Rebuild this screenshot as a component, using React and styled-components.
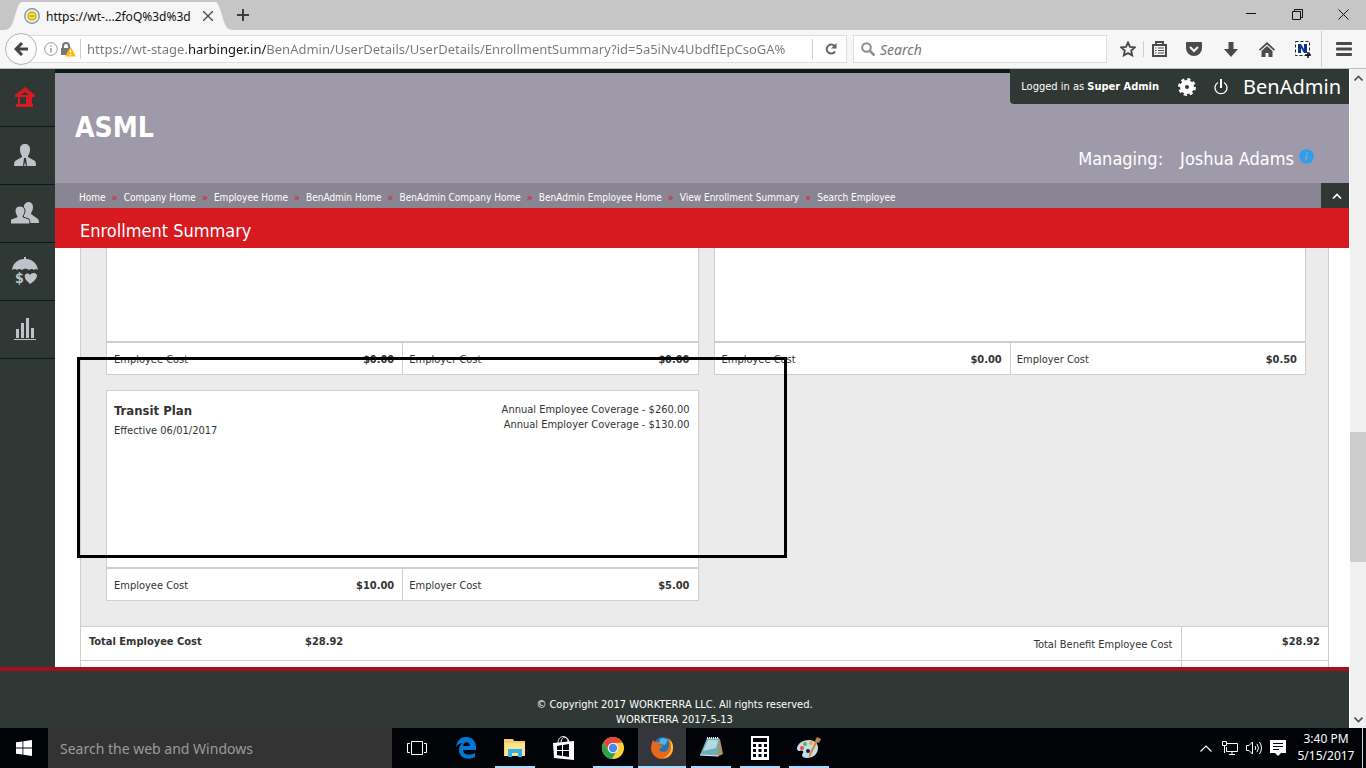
import React, { useState } from 'react';
import styled, { createGlobalStyle, css } from 'styled-components';

const GlobalStyle = createGlobalStyle`
  * {
    box-sizing: border-box;
  }

  body {
    margin: 0;
    overflow: hidden;
  }

  button, input {
    font: inherit;
    color: inherit;
    border: 0;
    padding: 0;
    background: none;
    outline: none;
  }

  svg {
    display: block;
  }
`;

const tahoma = "'DejaVu Sans Condensed', 'DejaVu Sans', sans-serif";
const segoe = "'Noto Sans', 'Open Sans', sans-serif";

// 전체 화면
const Screen = styled.div`
  height: 100vh;
  display: flex;
  flex-direction: column;
  font-family: ${segoe};
`;

const IconButton = styled.button`
  display: flex;
  align-items: center;
  justify-content: center;
  width: ${(props) => props.$width || 36}px;
  height: 100%;
  flex: none;
`;

// 탭 바
const TabStrip = styled.div`
  height: 30px;
  padding-left: 4px;
  display: flex;
  align-items: flex-end;
  background: #c6c6c6;
`;

const TabEdge = styled.svg`
  width: 18px;
  height: 28px;
  flex: none;
  transform: ${(props) => (props.$right ? 'scaleX(-1)' : 'none')};
`;

const Tab = styled.div`
  width: 193px;
  height: 28px;
  padding-left: 2px;
  display: flex;
  align-items: center;
  gap: 6px;
  background: #f6f6f6;
  font-size: 12px;
  color: #111;

  span {
    flex: 1;
    white-space: nowrap;
  }
`;

const WindowButtons = styled.div`
  height: 28px;
  margin-left: auto;
  display: flex;
`;

// 주소 바
const Toolbar = styled.div`
  height: 39px;
  padding-left: 5px;
  display: flex;
  align-items: center;
  background: #f6f6f6;
  border-bottom: 1px solid #bcbcbc;
`;

const BackButton = styled.button`
  position: relative;
  width: 32px;
  height: 32px;
  display: flex;
  align-items: center;
  justify-content: center;
  border: 1px solid #b4b4b4;
  border-radius: 50%;
  background: #fbfbfb;
  flex: none;
`;

const UrlBox = styled.div`
  flex: 1;
  height: 28px;
  margin: 0 6px 0 -8px;
  padding-left: 14px;
  display: flex;
  align-items: center;
  gap: 3px;
  background: #fff;
  border: 1px solid #dedede;
`;

const Rule = styled.i`
  width: 1px;
  height: ${(props) => props.$height || 20}px;
  background: #cfcfcf;
  flex: none;
`;

const UrlInput = styled.input`
  flex: 1;
  min-width: 0;
  height: 24px;
  margin-left: 3px;
  font-size: 13px;
  color: transparent;
  background: linear-gradient(to right, #777 101px, #111 101px, #111 179px, #777 179px);
  -webkit-background-clip: text;
  background-clip: text;
`;

const SearchBox = styled.label`
  width: 254px;
  height: 28px;
  padding-left: 7px;
  display: flex;
  align-items: center;
  gap: 5px;
  background: #fff;
  border: 1px solid #dedede;
  font-size: 14px;

  input {
    flex: 1;
    min-width: 0;
  }

  input::placeholder {
    color: #757575;
    font-style: italic;
    opacity: 1;
  }
`;

const ToolIcons = styled.div`
  height: 100%;
  margin-left: 6px;
  display: flex;
  align-items: center;
`;

// 페이지 영역
const Viewport = styled.div`
  flex: 1;
  min-height: 0;
  display: flex;
  font-family: ${tahoma};
  font-size: 11px;
  color: #333;
`;

const Page = styled.div`
  flex: 1;
  min-width: 0;
  display: flex;
  flex-direction: column;
  background: #fff;
`;

const PageBody = styled.div`
  flex: 1;
  min-height: 0;
  display: flex;
`;

const Sidebar = styled.nav`
  width: 55px;
  flex: none;
  background: #303836;
`;

const SideLink = styled.a`
  height: 58px;
  display: flex;
  align-items: center;
  justify-content: center;
  padding: 0 6px 2px 0;
  border-bottom: 1px solid #0b1622;
  color: ${(props) => (props.$active ? '#d71920' : '#bfc3c9')};
`;

const Main = styled.main`
  flex: 1;
  min-width: 0;
  display: flex;
  flex-direction: column;
`;

const Header = styled.header`
  position: relative;
  height: 114px;
  padding: 0 35px 13px 20px;
  display: flex;
  justify-content: space-between;
  align-items: flex-end;
  border-top: 4px solid #0f1b18;
  background: #9e9aa9;
  color: #fff;

  h1 {
    margin: 0 0 25px;
    font-size: 28px;
    line-height: 34px;
  }
`;

const Account = styled.div`
  position: absolute;
  top: -4px;
  right: 0;
  height: 35px;
  padding: 0 8px 0 11px;
  display: flex;
  align-items: center;
  border-radius: 0 0 0 4px;
  background: #303836;
  white-space: nowrap;
`;

const AccountTools = styled.div`
  margin: 0 15px 0 19px;
  display: flex;
  align-items: center;
  gap: 18px;
`;

const Brand = styled.span`
  font-family: ${segoe};
  font-size: 20px;
  line-height: 24px;
`;

const Managing = styled.div`
  display: flex;
  font-size: 18px;
  line-height: 22px;

  span {
    margin-right: 17px;
  }

  svg {
    margin: 1px 0 0 5px;
  }
`;

const Breadcrumb = styled.nav`
  height: 25px;
  padding-left: 24px;
  display: flex;
  align-items: center;
  gap: 6px;
  background: #8a8592;
  color: #d71920;
  font-size: 10px;
  white-space: nowrap;

  a, span {
    padding-top: 3px;
  }

  span {
    font-size: 11px;
    line-height: 13px;
  }

  a {
    color: #fff;
    text-decoration: none;
  }
`;

const Collapse = styled.button`
  width: 28px;
  height: 25px;
  padding-left: 4px;
  margin-left: auto;
  display: flex;
  align-items: center;
  justify-content: center;
  background: #303836;
`;

const PageTitle = styled.h2`
  height: 40px;
  margin: 0;
  padding: 0 25px;
  flex: none;
  background: #d71920;
  color: #fff;
  font-size: 18px;
  font-weight: normal;
  line-height: 46px;
`;

const Content = styled.section`
  position: relative;
  flex: 1;
  min-height: 0;
  padding: 0 20px 0 25px;
  overflow: hidden;
`;

const Panel = styled.div`
  border: 1px solid #cfcfcf;
  border-width: 0 1px;
  background: #ebebeb;
`;

const PlanGrid = styled.div`
  padding: 0 22px 25px 25px;
  display: grid;
  grid-template-columns: 1fr 1fr;
  gap: 15px;
`;

const PlanCard = styled.article`
  border: 1px solid #cfcfcf;
  border-top-width: ${(props) => (props.$scrolled ? 0 : 1)}px;
  background: #fff;
`;

const PlanBody = styled.div`
  height: ${(props) => (props.$scrolled ? 95 : 178)}px;
  padding: 11px 8px 0 7px;
  display: flex;
  justify-content: space-between;
  border-bottom: 2px solid #cfcfcf;
  line-height: 15px;

  h3 {
    margin: 0 0 3px;
    font-size: 13px;
    line-height: 18px;
  }
`;

const Coverage = styled.div`
  text-align: right;
`;

const CostRow = styled.div`
  height: 31px;
  display: grid;
  grid-template-columns: 1fr 1fr;
`;

const Cost = styled.div`
  padding: 2px 8px 0 7px;
  display: flex;
  align-items: center;
  justify-content: space-between;

  & + & {
    padding-left: 6px;
    border-left: 1px solid #cfcfcf;
  }
`;

const Totals = styled.table`
  width: 100%;
  border-collapse: collapse;
  table-layout: fixed;
  background: #fff;

  td, th {
    height: 34px;
    padding: 8px 8px 0;
    border-top: 1px solid #cfcfcf;
    line-height: 13px;
    vertical-align: top;
    text-align: left;
  }

  th.benefit {
    padding-top: 11px;
    font-weight: normal;
    text-align: right;
  }

  td.amount {
    border-left: 1px solid #cfcfcf;
    text-align: right;
  }
`;

// 화면 위에 그린 강조 표시
const Marker = styled.div`
  position: absolute;
  left: 22px;
  top: 109px;
  width: 710px;
  height: 201px;
  border: 3px solid #000;
  pointer-events: none;
`;

const Footer = styled.footer`
  height: 61px;
  padding-top: 26px;
  border-top: 4px solid #a01118;
  background: #303836;
  color: #fff;
  line-height: 15px;
  text-align: center;
`;

const Scrollbar = styled.div`
  width: 17px;
  flex: none;
  display: flex;
  flex-direction: column;
  border-left: 1px solid #fff;
  background: #f0f0f0;

  button {
    height: 17px;
    display: flex;
    align-items: center;
    justify-content: center;
  }
`;

const Track = styled.div`
  flex: 1;
  display: flex;
  flex-direction: column;

  &::before {
    content: '';
    flex: 346;
  }

  &::after {
    content: '';
    flex: 149;
  }
`;

const Thumb = styled.i`
  flex: 130;
  background: #cdcdcd;
`;

// 작업 표시줄
const Taskbar = styled.div`
  height: 40px;
  display: flex;
  background: #010307;
  color: #fff;
`;

const TaskSearch = styled.input`
  width: 344px;
  padding-left: 12px;
  background: #333;
  font-size: 14px;

  &::placeholder {
    color: #9b9b9b;
    opacity: 1;
  }
`;

const TaskApps = styled.div`
  display: flex;
  gap: 1px;
`;

const TaskButton = styled.button`
  width: ${(props) => (props.$wide ? 49 : 48)}px;
  display: flex;
  flex-direction: column;
  align-items: center;
  background: ${(props) => (props.$active ? '#34363b' : 'transparent')};

  &::before {
    content: '';
    height: 2px;
  }

  &::after {
    content: '';
    width: 40px;
    height: 2px;
    ${(props) => props.$open && css`background: #a6daff;`}
    ${(props) => props.$active && css`width: 48px;`}
  }

  svg {
    margin: auto 0;
  }
`;

const Tray = styled.div`
  margin-left: auto;
  padding-right: 3px;
  display: flex;
  align-items: center;
`;

const Clock = styled.time`
  width: 62px;
  margin: 0 5px 2px;
  font-size: 12px;
  line-height: 17px;
  text-align: center;
  white-space: nowrap;
`;

const trail = [
  'Home',
  'Company Home',
  'Employee Home',
  'BenAdmin Home',
  'BenAdmin Company Home',
  'BenAdmin Employee Home',
  'View Enrollment Summary',
  'Search Employee',
];

const sideItems = [
  {
    name: 'Home',
    icon: (
      <svg width="20" height="20" viewBox="0 0 20 20" fill="currentColor">
        <path d="M10 0 20 8v2H0V8z" />
        <path d="M3 9h14v8h1v3H1v-3h2z" />
        <path d="M10 5l4 3H6zM5 10h6v7H5z" fill="#303836" />
      </svg>
    ),
  },
  {
    name: 'Employee',
    icon: (
      <svg width="22" height="22" viewBox="0 0 22 22" fill="currentColor">
        <path d="M11 0c3 0 5 2 5 5 0 4-1 5-2 7v1l7 4q1 1 1 5H0q0-4 1-5l7-4v-1C7 10 6 9 6 5c0-3 2-5 5-5z" />
        <path d="M10 14h2l1 8h-1l-1-4-1 4H9z" fill="#303836" />
      </svg>
    ),
  },
  {
    name: 'Dependents',
    icon: (
      <svg width="28" height="22" viewBox="0 0 28 22" fill="currentColor">
        <path d="M17 0c3 0 5 2 5 5 0 4-2 5-2 7l7 5q1 1 1 4H13V3q2-3 4-3z" />
        <path
          d="M9 4c3 0 5 2 5 5 0 3-2 4-2 6l6 2q1 1 1 5H-1q0-4 1-5l6-2c0-2-2-3-2-6 0-3 2-5 5-5z"
          stroke="#303836"
          strokeWidth="1"
        />
      </svg>
    ),
  },
  {
    name: 'Benefits',
    icon: (
      <svg width="26" height="28" viewBox="0 0 26 28" fill="currentColor">
        <path d="M12 0h2v2c6 0 11 4 12 11q-2-2-4 0-2-2-5 0-4-3-7 0-3-2-5 0-2-2-5 0C1 6 6 2 12 2z" />
        <path d="M18 27c-4-4-6-6-5-9 1-2 4-2 5 0 1-2 5-3 7 0 0 4-3 6-7 9z" />
        <text x="3" y="26" fontSize="14" fontWeight="bold" fontFamily="DejaVu Sans Condensed">$</text>
      </svg>
    ),
  },
  {
    name: 'Reports',
    icon: (
      <svg width="22" height="22" viewBox="0 0 22 22" fill="currentColor">
        <path d="M2 11h3v9H2zM7 5h3v15H7zM12 0h3v20h-3zM17 10h3v10h-3zM0 21h22v1H0z" />
      </svg>
    ),
  },
];

const Arrow = ({ down, color = '#505050', width = 9 }) => (
  <svg width={width} height="6" viewBox="0 0 9 6" fill="none" stroke={color} strokeWidth="1.600">
    <path d={down ? 'M.5.5l4 4 4-4' : 'M.5 5.500l4-4 4 4'} />
  </svg>
);

function BrowserChrome() {
  const [url, setUrl] = useState(
    'https://wt-stage.harbinger.in/BenAdmin/UserDetails/UserDetails/EnrollmentSummary?id=5a5iNv4UbdfIEpCsoGA%'
  );

  return (
    <>
      <TabStrip>
        <TabEdge viewBox="0 0 18 28">
          <path d="M0 28c5 0 7-3 9-8l4-13c2-5 3-7 5-7v28z" fill="#f6f6f6" />
        </TabEdge>
        <Tab>
          <svg width="16" height="16" viewBox="0 0 16 16" fill="none">
            <circle cx="8" cy="8" r="7.300" fill="#e9e9e9" stroke="#8b8b8b" strokeWidth="1.200" />
            <circle cx="8" cy="8" r="4" fill="#f5e62b" stroke="#b39a22" />
            <path d="M6 8h4" stroke="#97821d" />
          </svg>
          <span>https://wt-...2foQ%3d%3d</span>
          <IconButton $width={14} aria-label="Close tab">
            <svg width="10" height="10" stroke="#444" strokeWidth="1.300">
              <path d="M0 0l10 10M10 0L0 10" />
            </svg>
          </IconButton>
        </Tab>
        <TabEdge $right viewBox="0 0 18 28">
          <path d="M0 28c5 0 7-3 9-8l4-13c2-5 3-7 5-7v28z" fill="#f6f6f6" />
        </TabEdge>
        <IconButton $width={20} aria-label="New tab">
          <svg width="12" height="12" stroke="#3d3d3d" strokeWidth="2">
            <path d="M6 0v12M0 6h12" />
          </svg>
        </IconButton>
        <WindowButtons>
          <IconButton $width={46} aria-label="Minimize">
            <svg width="10" height="10" stroke="#111"><path d="M0 2.500h10" /></svg>
          </IconButton>
          <IconButton $width={46} aria-label="Restore">
            <svg width="11" height="14" fill="none" stroke="#111">
              <path d="M.5 2.500h8v8h-8zM2.500 2.500v-2h8v8h-2" />
            </svg>
          </IconButton>
          <IconButton $width={46} aria-label="Close">
            <svg width="11" height="14" stroke="#111"><path d="M.5.5l10 10M10.500.5l-10 10" /></svg>
          </IconButton>
        </WindowButtons>
      </TabStrip>

      <Toolbar>
        <BackButton aria-label="Back">
          <svg width="14" height="14" fill="none" stroke="#444" strokeWidth="3">
            <path d="M14 7H3M8 1L2 7l6 6" />
          </svg>
        </BackButton>
        <UrlBox>
          <svg width="14" height="14" viewBox="0 0 14 14" fill="none" stroke="#999">
            <circle cx="7" cy="7" r="6.300" />
            <path d="M7 6v4.500M7 3.300v1.500" strokeWidth="1.500" />
          </svg>
          <svg width="16" height="15" viewBox="0 0 16 15">
            <path d="M2 6V4a3 3 0 0 1 6 0v2" fill="none" stroke="#777" strokeWidth="2" />
            <path d="M0 6h9v7H0z" fill="#777" />
            <path d="M9.500 4.500L15 14.500H4z" fill="#fdb813" />
            <path d="M9.500 8v3M9.500 12v1.300" stroke="#fff" strokeWidth="1.300" />
          </svg>
          <Rule />
          <UrlInput aria-label="Address" value={url} onChange={(e) => setUrl(e.target.value)} />
          <Rule />
          <IconButton $width={30} aria-label="Reload">
            <svg width="12" height="12" viewBox="0 0 12 12" fill="none" stroke="#666" strokeWidth="2">
              <path d="M10 8.500A4.500 4.500 0 1 1 9.500 3" />
              <path d="M11.500 0v5.500H6z" fill="#666" stroke="none" />
            </svg>
          </IconButton>
        </UrlBox>
        <SearchBox>
          <svg width="14" height="14" fill="none" stroke="#8d8d8d" strokeWidth="2">
            <circle cx="5.500" cy="5.500" r="4.300" />
            <path d="M8.500 8.500l5 5" strokeWidth="2.500" />
          </svg>
          <input placeholder="Search" aria-label="Search" />
        </SearchBox>
        <ToolIcons>
          <IconButton $width={30} aria-label="Bookmark">
            <svg width="16" height="16" viewBox="0 0 16 16" fill="none" stroke="#4a4a4a" strokeWidth="1.900">
              <path d="M8 1.500l2 4.400 4.700.5-3.500 3.200 1 4.800L8 12l-4.200 2.400 1-4.800L1.300 6.400 6 5.900z" />
            </svg>
          </IconButton>
          <Rule $height={16} />
          <IconButton $width={31} aria-label="Bookmarks list">
            <svg width="15" height="16" viewBox="0 0 15 16" fill="none" stroke="#4a4a4a" strokeWidth="2">
              <path d="M1 4h13v11H1z" />
              <path d="M4 3V1h7v2" />
              <path d="M3 7h1.500M6 7h6M3 9.500h1.500M6 9.500h6M3 12h1.500M6 12h6" strokeWidth="1.200" />
            </svg>
          </IconButton>
          <IconButton $width={38} aria-label="Pocket">
            <svg width="16" height="15" viewBox="0 0 16 15">
              <path d="M1 0h14q1 0 1 1v5a8 8 0 0 1-16 0V1q0-1 1-1z" fill="#4a4a4a" />
              <path d="M4 5l4 4 4-4" fill="none" stroke="#f6f6f6" strokeWidth="2" />
            </svg>
          </IconButton>
          <IconButton aria-label="Downloads">
            <svg width="14" height="15" fill="#4a4a4a"><path d="M4.500 0h5v7H14l-7 8-7-8h4.500z" /></svg>
          </IconButton>
          <IconButton aria-label="Home page">
            <svg width="16" height="15" viewBox="0 0 16 15">
              <path d="M8 0l8 7.500-1 1.200L8 2.500 1 8.700 0 7.500z" fill="#4a4a4a" />
              <path d="M8 4l5.500 5v6H9.500v-4h-3v4h-4V9z" fill="#4a4a4a" />
            </svg>
          </IconButton>
          <IconButton aria-label="Capture">
            <svg width="16" height="17" viewBox="0 0 16 17">
              <path d="M.5.5h14v14H.5z" fill="#fff" stroke="#222" strokeDasharray="3 2" />
              <path d="M3 12V3h3l3 5V3h3v9H9L6 7v5z" fill="#0a3693" />
              <path d="M13 11v6M10 14h6" stroke="#111" strokeWidth="1.500" />
            </svg>
          </IconButton>
          <Rule $height={36} />
          <IconButton $width={44} aria-label="Open menu">
            <svg width="16" height="14" fill="#4a4a4a">
              <rect width="16" height="3" rx="1" />
              <rect y="5.500" width="16" height="3" rx="1" />
              <rect y="11" width="16" height="3" rx="1" />
            </svg>
          </IconButton>
        </ToolIcons>
      </Toolbar>
    </>
  );
}

function PlanCosts({ employee, employer }) {
  return (
    <CostRow>
      <Cost>
        Employee Cost <b>{employee}</b>
      </Cost>
      <Cost>
        Employer Cost <b>{employer}</b>
      </Cost>
    </CostRow>
  );
}

function EnrollmentSummary() {
  return (
    <Content>
      <Panel>
        <PlanGrid>
          <PlanCard $scrolled>
            <PlanBody $scrolled />
            <PlanCosts employee="$0.00" employer="$0.00" />
          </PlanCard>
          <PlanCard $scrolled>
            <PlanBody $scrolled />
            <PlanCosts employee="$0.00" employer="$0.50" />
          </PlanCard>
          <PlanCard>
            <PlanBody>
              <div>
                <h3>Transit Plan</h3>
                Effective 06/01/2017
              </div>
              <Coverage>
                <div>Annual Employee Coverage - $260.00</div>
                <div>Annual Employer Coverage - $130.00</div>
              </Coverage>
            </PlanBody>
            <PlanCosts employee="$10.00" employer="$5.00" />
          </PlanCard>
        </PlanGrid>
        <Totals>
          <colgroup>
            <col width="216" />
            <col />
            <col width="260" />
            <col width="147" />
          </colgroup>
          <tbody>
            <tr>
              <th>Total Employee Cost</th>
              <td><b>$28.92</b></td>
              <th className="benefit">Total Benefit Employee Cost</th>
              <td className="amount"><b>$28.92</b></td>
            </tr>
            <tr>
              <td colSpan={3} />
              <td className="amount" />
            </tr>
          </tbody>
        </Totals>
      </Panel>
      <Marker />
    </Content>
  );
}

// 하단 앱 아이콘
const apps = [
  {
    name: 'Task view',
    wide: true,
    icon: (
      <svg width="20" height="16" fill="none" stroke="#fff">
        <path d="M4.500 1.500h11v13h-11zM3 3.500H.5v9H3M17 3.500h2.500v9H17" />
      </svg>
    ),
  },
  {
    name: 'Edge',
    icon: (
      <svg width="20" height="22" viewBox="0 0 20 22">
        <path
          d="M0 10C1 3 5 0 10 0c7 0 10 5 10 10v3H7c0 5 7 6 12 3v4c-7 4-16 1-16-7 0-4 2-6 4-7-3 0-5 1-7 4zm7-1h7c0-5-6-5-7 0z"
          fill="#0078d7"
        />
      </svg>
    ),
  },
  {
    name: 'File Explorer',
    open: true,
    icon: (
      <svg width="22" height="20" viewBox="0 0 22 20">
        <path d="M0 1h9l1 2h11v15H0z" fill="#f3cf66" />
        <path d="M1 5h20v13H1z" fill="#fde58f" />
        <path d="M4 11h14v8h-4v-4H8v4H4z" fill="#2fb2ea" />
      </svg>
    ),
  },
  {
    name: 'Store',
    icon: (
      <svg width="22" height="24" viewBox="0 0 22 24">
        <path d="M5 7c0-8 9-9 10-1M8 6c1-7 7-6 8 0" fill="none" stroke="#fff" />
        <path d="M0 7l21-2v19L1 22z" fill="#fff" />
        <path d="M4 10l5-1v5H4zM10 9l6-1v6h-6zM4 15h5v5l-5-1zM10 15h6v6l-6-1z" fill="#010307" />
      </svg>
    ),
  },
  {
    name: 'Chrome',
    open: true,
    icon: (
      <svg width="22" height="22" viewBox="0 0 22 22">
        <circle cx="11" cy="11" r="11" fill="#fdd23c" />
        <path d="M1.500 5.500A11 11 0 0 1 20.500 5.500L11 6l-4.500 7.500z" fill="#df4a3c" />
        <path d="M1.500 5.500A11 11 0 0 0 10 22l5-8.500-8.500 0z" fill="#2ba24c" />
        <circle cx="11" cy="11" r="5.300" fill="#f5f5f5" />
        <circle cx="11" cy="11" r="4.200" fill="#4a87ee" />
      </svg>
    ),
  },
  {
    name: 'Firefox',
    open: true,
    active: true,
    icon: (
      <svg width="22" height="22" viewBox="0 0 22 22">
        <circle cx="12" cy="10" r="10" fill="#2273b9" />
        <path d="M9 2q4-2 8 1l-3 5-6-1z" fill="#52b3e0" />
        <path
          d="M2 3l2 2 5 0-1 3 4 1-2 2-2 1c1 4 7 4 9 0 2-4 1-8-1-11 4 2 6 6 6 11 0 6-5 10-11 10S0 17 0 11c0-3 1-5 2-8z"
          fill="#e8681c"
        />
        <path d="M18 2c4 3 5 8 3 13-2 4-5 6-9 6 5-2 8-6 8-10 0-3 0-6-2-9z" fill="#fbc52d" />
      </svg>
    ),
  },
  {
    name: 'Notepad',
    open: true,
    icon: (
      <svg width="24" height="22" viewBox="0 0 24 22">
        <path d="M19 2l2 0 3 15-6 3z" fill="#a99468" />
        <path d="M8 1h12l-1 18-18-1z" fill="#6fadb9" />
        <path d="M9 3h10l-2 8L4 14z" fill="#b4dae0" />
        <path d="M8 1h12" stroke="#e9eef0" strokeWidth="2" strokeDasharray="1 1" />
        <path d="M1 18l18 1" stroke="#e8f1f3" />
      </svg>
    ),
  },
  {
    name: 'Calculator',
    open: true,
    icon: (
      <svg width="18" height="24" viewBox="0 0 18 24">
        <path d="M0 0h18v24H0z" fill="#fff" />
        <path d="M2 2h14v4H2z" fill="#010307" />
        <path d="M2 9.500h14M2 14.500h14M2 19.500h14" stroke="#010307" strokeWidth="3" strokeDasharray="3 2.500" />
      </svg>
    ),
  },
  {
    name: 'Paint',
    open: true,
    icon: (
      <svg width="24" height="22" viewBox="0 0 24 22">
        <path d="M12 3c6 0 9 4 9 8 0 6-5 10-11 10-5 0-6-3-4-5 1-2-1-3-3-2-3 0-3-2-3-3 1-5 6-8 12-8z" fill="#c5deee" />
        <circle cx="5" cy="11" r="2" fill="#e5533c" />
        <circle cx="8" cy="7" r="2" fill="#5cb54a" />
        <circle cx="14" cy="6" r="2" fill="#f2a53a" />
        <circle cx="11" cy="14" r="2" fill="#15202b" />
        <path d="M21 4L14 18l-2 3 0-4 7-14z" fill="#d98a3d" />
        <path d="M18 4l2-4 4 2-2 4z" fill="#b5835a" />
      </svg>
    ),
  },
];

function TaskbarView() {
  return (
    <Taskbar>
      <IconButton $width={48} aria-label="Start">
        <svg width="16" height="16" viewBox="0 0 16 16" fill="#fff">
          <path d="M0 2.300l6.500-.9v6.200H0zM7.300 1.300L16 0v7.600H7.300zM0 8.400h6.500v6.200L0 13.700zM7.300 8.400H16V16l-8.700-1.300z" />
        </svg>
      </IconButton>
      <TaskSearch placeholder="Search the web and Windows" aria-label="Search the web and Windows" />
      <TaskApps>
        {apps.map((app) => (
          <TaskButton key={app.name} aria-label={app.name} $wide={app.wide} $open={app.open} $active={app.active}>
            {app.icon}
          </TaskButton>
        ))}
      </TaskApps>
      <Tray>
        <IconButton $width={24} aria-label="Hidden icons">
          <svg width="12" height="7" fill="none" stroke="#fff" strokeWidth="1.200"><path d="M.5 6.500L6 1l5.500 5.500" /></svg>
        </IconButton>
        <IconButton $width={24} aria-label="Network">
          <svg width="16" height="14" fill="none" stroke="#fff">
            <path d="M5 2.500h10.500v8H4.500V6M.5.5h4v4h-4zM2.500 4.500v7.500M7 13.500h6M10 10.500v3" />
          </svg>
        </IconButton>
        <IconButton $width={24} aria-label="Volume">
          <svg width="17" height="14" fill="none" stroke="#fff">
            <path d="M.5 4.500H3L6.500 1v12L3 9.500H.5zM9 5q1.500 2 0 4M11 3q3 4 0 8M13.500 1q4 6 0 12" />
          </svg>
        </IconButton>
        <IconButton $width={24} aria-label="Notifications">
          <svg width="16" height="16" viewBox="0 0 16 16">
            <path d="M0 0h16v13h-5l-3 3-3-3H0z" fill="#fff" />
            <path d="M3 3.500h10M3 6.500h10M3 9.500h6" stroke="#010307" />
          </svg>
        </IconButton>
        <Clock>
          3:40 PM
          <br />
          5/15/2017
        </Clock>
        <Rule $height={40} />
      </Tray>
    </Taskbar>
  );
}

function App() {
  return (
    <Screen>
      <GlobalStyle />
      <BrowserChrome />
      <Viewport>
        <Page>
          <PageBody>
            <Sidebar>
              {sideItems.map((item, i) => (
                <SideLink key={item.name} href="#" aria-label={item.name} $active={i === 0}>
                  {item.icon}
                </SideLink>
              ))}
            </Sidebar>
            <Main>
              <Header>
                <h1>ASML</h1>
                <Account>
                  <span>
                    Logged in as <b>Super Admin</b>
                  </span>
                  <AccountTools>
                    <button aria-label="Settings">
                      <svg width="18" height="18" viewBox="0 0 18 18" fill="none" stroke="#fff">
                        <circle cx="9" cy="9" r="4.500" strokeWidth="5" />
                        <circle cx="9" cy="9" r="7.700" strokeWidth="2.500" strokeDasharray="3.200 2.847" />
                      </svg>
                    </button>
                    <button aria-label="Log out">
                      <svg width="14" height="16" viewBox="0 0 14 16" fill="none" stroke="#fff" strokeWidth="1.300">
                        <path d="M4 3.500a6 6 0 1 0 6 0" />
                        <path d="M7 0v9" strokeWidth="2" />
                      </svg>
                    </button>
                  </AccountTools>
                  <Brand>BenAdmin</Brand>
                </Account>
                <Managing>
                  <span>Managing:</span>
                  Joshua Adams
                  <svg width="15" height="15" viewBox="0 0 15 15">
                    <circle cx="7.500" cy="7.500" r="7.300" fill="#2e9fec" />
                    <path d="M8.500 3l-.3 1.700M7.700 6l-1 5.500" stroke="#9e9aa9" strokeWidth="1.800" />
                  </svg>
                </Managing>
              </Header>
              <Breadcrumb>
                {trail.map((name, i) => (
                  <React.Fragment key={name}>
                    {i > 0 && <span>»</span>}
                    <a href="#">{name}</a>
                  </React.Fragment>
                ))}
                <Collapse aria-label="Collapse header">
                  <Arrow color="#fff" width={10} />
                </Collapse>
              </Breadcrumb>
              <PageTitle>Enrollment Summary</PageTitle>
              <EnrollmentSummary />
            </Main>
          </PageBody>
          <Footer>
            © Copyright 2017 WORKTERRA LLC. All rights reserved.
            <br />
            WORKTERRA 2017-5-13
          </Footer>
        </Page>
        <Scrollbar>
          <button aria-label="Scroll up"><Arrow /></button>
          <Track>
            <Thumb />
          </Track>
          <button aria-label="Scroll down"><Arrow down /></button>
        </Scrollbar>
      </Viewport>
      <TaskbarView />
    </Screen>
  );
}

export default App;
